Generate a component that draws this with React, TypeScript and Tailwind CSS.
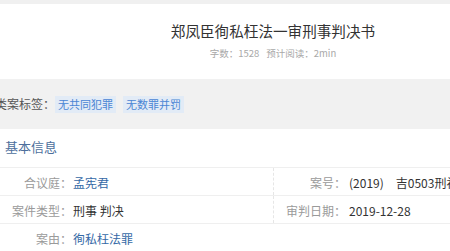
const FONT = "font-['Noto_Sans_CJK_SC','Noto_Sans',sans-serif]";

function Row({
  label,
  value,
  link,
  right,
}: {
  label: string;
  value: string;
  link?: boolean;
  right?: { label: string; value: string };
}) {
  return (
    <div className="flex h-[28px] border-b border-[#efefef]">
      <div className="flex w-[273px] shrink-0 items-center pt-[2px]">
        <span className="w-[72px] shrink-0 text-right text-[12px] text-[#9a9a9a]">{label}</span>
        <span className={`pl-[1px] text-[12px] ${link ? "text-[#3569a6]" : "text-[#333]"}`}>{value}</span>
      </div>
      {right && (
        <div className="flex flex-1 items-center border-l border-dashed border-[#e6e6e6] pt-[2px]">
          <span className="w-[72px] shrink-0 text-right text-[12px] text-[#9a9a9a]">{right.label}</span>
          <span className="whitespace-pre pl-[3px] text-[12px] text-[#333]">{right.value}</span>
        </div>
      )}
    </div>
  );
}

export default function App() {
  return (
    <div className={`h-[251px] w-[450px] overflow-hidden bg-white ${FONT}`}>
      <div className="h-[4px] bg-[#f0f0f0]" />

      {/* header */}
      <div className="flex h-[75px] w-[546px] flex-col items-center pt-[16px]">
        <h1 className="text-[14.6px] leading-[22px] text-[#333]">郑凤臣徇私枉法一审刑事判决书</h1>
        <div className="mt-[4px] flex gap-[7px] text-[9.5px] leading-[14px] text-[#a8a8a8]">
          <span>字数：1528</span>
          <span>预计阅读：2min</span>
        </div>
      </div>

      {/* tags */}
      <div className="flex h-[50px] items-center bg-[#f1f1f1]">
        <div className="ml-[-5px] flex items-center">
          <span className="w-[60px] text-[12px] text-[#555]">类案标签：</span>
          <div className="flex gap-[7px]">
            <span className="flex h-[17px] w-[61px] items-center justify-center bg-[#e2ebf6] text-[11px] text-[#4a86d4]">无共同犯罪</span>
            <span className="flex h-[17px] w-[61px] items-center justify-center bg-[#e2ebf6] text-[11px] text-[#4a86d4]">无数罪并罚</span>
          </div>
        </div>
      </div>

      {/* basic info */}
      <div className="h-[39px] border-b border-[#efefef] pl-[5px] pt-[4px]">
        <span className="text-[13px] leading-[18px] text-[#4d6f9c]">基本信息</span>
      </div>
      <Row label="合议庭：" value="孟宪君" link right={{ label: "案号：", value: "(2019)　吉0503刑初123号" }} />
      <Row label="案件类型：" value="刑事 判决" right={{ label: "审判日期：", value: "2019-12-28" }} />
      <Row label="案由：" value="徇私枉法罪" link />
    </div>
  );
}
